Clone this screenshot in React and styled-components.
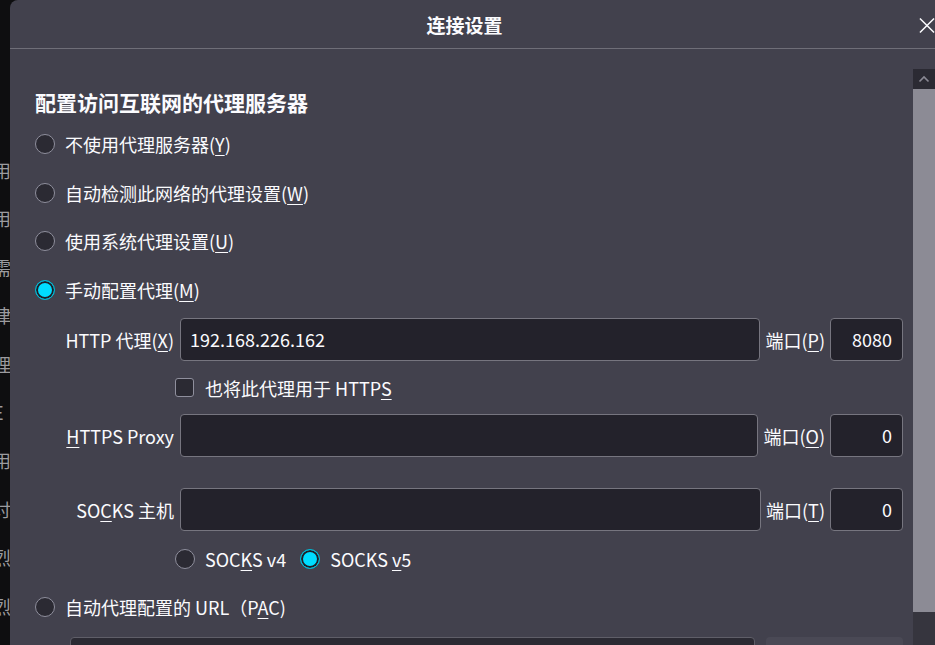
import React from "react";
import styled, { createGlobalStyle } from "styled-components";

const GlobalStyle = createGlobalStyle`
  html, body {
    margin: 0;
    height: 100%;
    overflow: hidden;
    background: #0e0e10;
  }
  #root {
    height: 100%;
  }
  body {
    font-family: "Noto Sans CJK SC", "Noto Sans", sans-serif;
    color: #fbfbfe;
  }
`;

// lines of the page behind the dialog, only their left bits show
const behindLines = ["用户", "用于", "需要", "律他", "理选", "E", "用户", "讨论", "烈建", "烈建"];

const radioOptions = [
  { text: "不使用代理服务器", key: "Y" },
  { text: "自动检测此网络的代理设置", key: "W" },
  { text: "使用系统代理设置", key: "U" },
  { text: "手动配置代理", key: "M", checked: true },
];

function App() {
  return (
    <>
      <GlobalStyle />
      <Page>
        <Behind>
          {behindLines.map((line, i) => (
            <BehindLine key={i}>{line}</BehindLine>
          ))}
        </Behind>
        <Dialog>
          <Header>
            <Title>连接设置</Title>
            <CloseButton>
              <svg width="17" height="17" viewBox="0 0 17 17">
                <path d="M1 1 L16 16 M16 1 L1 16" stroke="#fbfbfe" strokeWidth="1.6" fill="none" />
              </svg>
            </CloseButton>
          </Header>
          <Body>
            <Content>
              <Heading>配置访问互联网的代理服务器</Heading>
              <OptionList>
                {radioOptions.map((opt) => (
                  <OptionRow key={opt.key}>
                    <Radio $checked={opt.checked} />
                    <span>
                      {opt.text}(<Key>{opt.key}</Key>)
                    </span>
                  </OptionRow>
                ))}
              </OptionList>

              <Manual>
                <FieldRow>
                  <FieldLabel>
                    HTTP 代理(<Key>X</Key>)
                  </FieldLabel>
                  <TextBox>192.168.226.162</TextBox>
                  <PortLabel>
                    端口(<Key>P</Key>)
                  </PortLabel>
                  <PortBox>8080</PortBox>
                </FieldRow>
                <CheckRow>
                  <Checkbox />
                  <span>
                    也将此代理用于 HTTP<Key>S</Key>
                  </span>
                </CheckRow>
                <FieldRow>
                  <FieldLabel>
                    <Key>H</Key>TTPS Proxy
                  </FieldLabel>
                  <TextBox />
                  <PortLabel>
                    端口(<Key>O</Key>)
                  </PortLabel>
                  <PortBox>0</PortBox>
                </FieldRow>
                <FieldRow $gap={31}>
                  <FieldLabel>
                    SO<Key>C</Key>KS 主机
                  </FieldLabel>
                  <TextBox />
                  <PortLabel>
                    端口(<Key>T</Key>)
                  </PortLabel>
                  <PortBox>0</PortBox>
                </FieldRow>
                <SocksRow>
                  <SocksChoice>
                    <Radio />
                    <span>
                      SOC<Key>K</Key>S v4
                    </span>
                  </SocksChoice>
                  <SocksChoice>
                    <Radio $checked />
                    <span>
                      SOCKS <Key>v</Key>5
                    </span>
                  </SocksChoice>
                </SocksRow>
              </Manual>

              <OptionRow $height={48}>
                <Radio />
                <span>
                  自动代理配置的 URL（P<Key>A</Key>C)
                </span>
              </OptionRow>
              <PacRow>
                <PacInput />
                <ReloadButton />
              </PacRow>
            </Content>
            <Scrollbar>
              <ScrollArrow>
                <svg width="12" height="8" viewBox="0 0 12 8">
                  <path d="M1.5 6.5 L6 2 L10.5 6.5" stroke="#8a8994" strokeWidth="1.6" fill="none" />
                </svg>
              </ScrollArrow>
              <Thumb />
              <Track />
            </Scrollbar>
          </Body>
        </Dialog>
      </Page>
    </>
  );
}

export default App;

const Page = styled.div`
  display: flex;
  height: 100%;
  overflow: hidden;
`;

const Behind = styled.div`
  width: 10px;
  flex-shrink: 0;
  overflow: hidden;
  padding-top: 146px;
`;

const BehindLine = styled.div`
  height: 48.4px;
  line-height: 48.4px;
  margin-left: -7px;
  white-space: nowrap;
  font-size: 18px;
  color: #9b9b9f;
`;

const Dialog = styled.div`
  width: 925px;
  flex-shrink: 0;
  height: 100%;
  background: #42414d;
  border-top-left-radius: 8px;
  display: flex;
  flex-direction: column;
  overflow: hidden;
`;

const Header = styled.div`
  height: 48px;
  flex-shrink: 0;
  display: flex;
  align-items: center;
  border-bottom: 1px solid #6f6e78;
`;

const Title = styled.div`
  flex: 1;
  text-align: center;
  font-size: 19px;
  font-weight: 700;
`;

const CloseButton = styled.div`
  width: 16px;
  display: flex;
  align-items: center;
  padding-top: 2px;
`;

const Body = styled.div`
  flex: 1;
  min-height: 0;
  display: flex;
  margin-top: 20px;
`;

const Content = styled.div`
  flex: 1;
  padding: 0 10px 0 25px;
  font-size: 18px;
`;

const Heading = styled.div`
  margin-top: 20px;
  height: 26px;
  line-height: 26px;
  font-size: 21px;
  font-weight: 700;
`;

const OptionList = styled.div`
  margin-top: 5px;
`;

const OptionRow = styled.div`
  display: flex;
  align-items: center;
  gap: 10px;
  height: ${(p) => p.$height || 48.6}px;
`;

const Key = styled.span`
  text-decoration: underline;
  text-underline-offset: 3px;
  text-decoration-thickness: 1px;
`;

const Radio = styled.span`
  box-sizing: border-box;
  width: 20px;
  height: 20px;
  flex-shrink: 0;
  border-radius: 50%;
  background: ${(p) => (p.$checked ? "#00ddff" : "#2b2a33")};
  border: ${(p) => (p.$checked ? "1px solid #00b7d2" : "1.5px solid #8f8f9d")};
  box-shadow: ${(p) => (p.$checked ? "inset 0 0 0 2px #1f1e26" : "none")};
`;

const Manual = styled.div`
  margin-top: 4px;
  padding-left: 30px;
`;

const FieldRow = styled.div`
  display: flex;
  align-items: center;
  gap: 5px;
  height: 43px;
  margin-top: ${(p) => p.$gap || 0}px;
`;

const FieldLabel = styled.div`
  width: 109px;
  margin-right: 1px;
  text-align: right;
  white-space: nowrap;
`;

const TextBox = styled.div`
  flex: 1;
  box-sizing: border-box;
  height: 43px;
  line-height: 41px;
  padding: 0 9px;
  background: #23222b;
  border: 1px solid #76757f;
  border-radius: 4px;
  white-space: nowrap;
`;

const PortLabel = styled.div`
  white-space: nowrap;
`;

const PortBox = styled(TextBox)`
  flex: 0 0 73px;
  text-align: right;
  padding: 0 10px;
`;

const CheckRow = styled.div`
  display: flex;
  align-items: center;
  gap: 11px;
  height: 53px;
  padding-left: 110px;
`;

const Checkbox = styled.span`
  box-sizing: border-box;
  width: 19px;
  height: 19px;
  border-radius: 3px;
  background: #2b2a33;
  border: 1.5px solid #8f8f9d;
`;

const SocksRow = styled.div`
  display: flex;
  align-items: center;
  gap: 14px;
  height: 48px;
  margin-top: 4px;
  padding-left: 110px;
`;

const SocksChoice = styled.div`
  display: flex;
  align-items: center;
  gap: 10px;
`;

const PacRow = styled.div`
  display: flex;
  gap: 11px;
  margin-top: 5.6px;
  padding-left: 35px;
`;

const PacInput = styled.div`
  flex: 1;
  height: 43px;
  background: #2b2a33;
  border: 1px solid #5f5e68;
  border-radius: 4px;
`;

const ReloadButton = styled.div`
  width: 137px;
  height: 43px;
  background: #4a4955;
  border-radius: 4px;
`;

const Scrollbar = styled.div`
  width: 22px;
  flex-shrink: 0;
  display: flex;
  flex-direction: column;
`;

const ScrollArrow = styled.div`
  height: 20px;
  background: #2b2a33;
  display: flex;
  align-items: center;
  justify-content: center;
`;

const Thumb = styled.div`
  height: 523px;
  background: #8c8b95;
`;

const Track = styled.div`
  flex: 1;
  background: #36353e;
`;
